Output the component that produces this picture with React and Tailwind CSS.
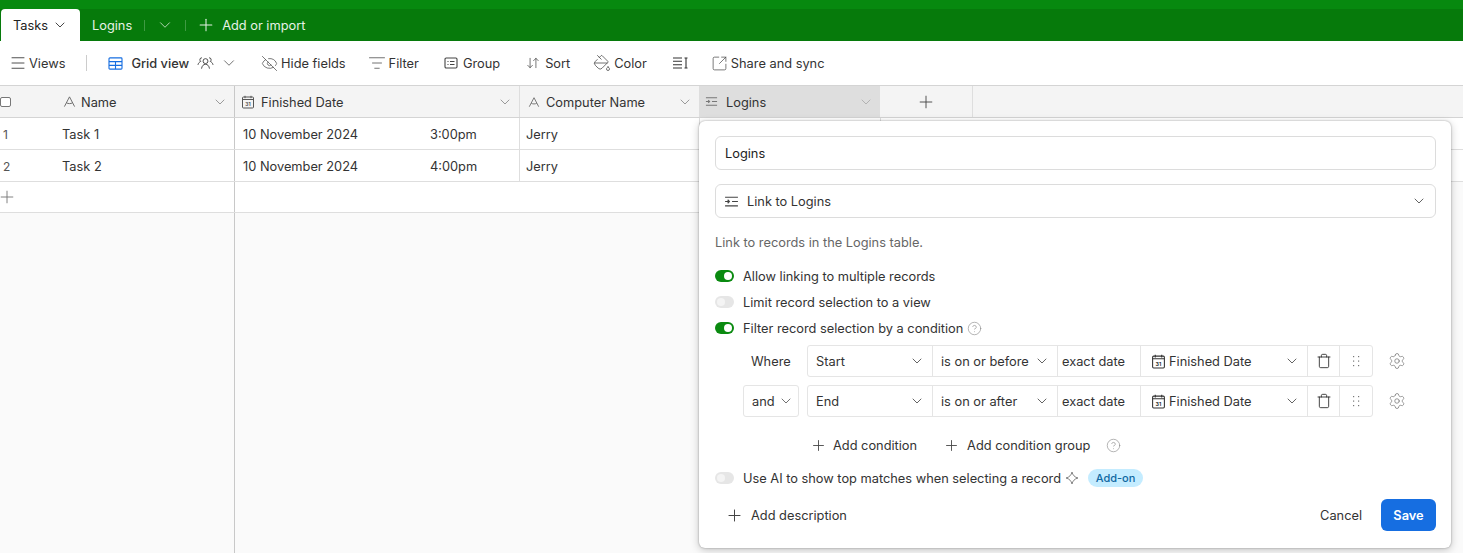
import { ChevronDown, Plus, Menu, EyeOff, ListFilter, ArrowDownUp, PaintBucket, SquareArrowOutUpRight, Trash, Settings, CircleHelp } from "lucide-react";

const T = ({ className = "", children }) => <span className={`pt-[2px] ${className}`}>{children}</span>;

const CalendarIcon = ({ className = "" }) => (
    <svg viewBox="0 0 14 14" className={className} fill="none" stroke="currentColor" strokeWidth="1">
        <rect x="1.5" y="2" width="11" height="11" rx="1" />
        <path d="M1.5 4.5h11M4 .8v2.400M10 .8v2.400" />
        <text x="7" y="11" textAnchor="middle" fontSize="5" fontWeight="700" fill="currentColor" stroke="none">31</text>
    </svg>
);

const LinkIcon = ({ className = "" }) => (
    <svg viewBox="0 0 14 14" className={className} fill="none" stroke="currentColor" strokeWidth="1.1">
        <path d="M1 3h12M7.500 7h5.500M1 11h12M1 7h3.800M3.400 5.400 5 7 3.400 8.600" />
    </svg>
);

const TextIcon = ({ className = "" }) => (
    <svg viewBox="0 0 14 14" className={className} fill="none" stroke="currentColor" strokeWidth="1">
        <path d="M1.500 12.500 7 2l5.500 10.500M3.800 8.500c2 1 4.400 1 6.400 0" />
    </svg>
);

const GridIcon = () => (
    <svg viewBox="0 0 16 14" className="h-[13px] w-[15px] text-[#166ee1]" fill="none" stroke="currentColor" strokeWidth="1.2">
        <rect x="1" y="1" width="14" height="12" rx="1" />
        <path d="M1 5h14M1 9h14M8 5v8" />
    </svg>
);

const PeopleIcon = () => (
    <svg viewBox="0 0 18 14" className="h-[14px] w-[17px] text-[#333]" fill="none" stroke="currentColor" strokeWidth="0.9">
        <circle cx="9" cy="5" r="2.600" />
        <path d="M4.800 13c.4-3 2-4.600 4.200-4.600s3.800 1.600 4.200 4.600" />
        <path d="M5.200 1.500a2 2 0 0 0-1.200 3.700C2.400 6 1.400 7.200 1 9M12.800 1.500a2 2 0 0 1 1.200 3.700c1.600.8 2.600 2 3 3.800" />
    </svg>
);

const GroupIcon = () => (
    <svg viewBox="0 0 14 14" className="h-[14px] w-[14px] text-[#444]" fill="none" stroke="currentColor" strokeWidth="1.1">
        <rect x="1" y="2" width="12" height="10" rx="1.200" />
        <path d="M3.500 5.500h1M6 5.500h4.500M3.500 8.500h1M6 8.500h4.500" />
    </svg>
);

const RowHeightIcon = () => (
    <svg viewBox="0 0 16 14" className="h-[14px] w-[16px] text-[#333]" fill="none" stroke="currentColor" strokeWidth="1.1">
        <path d="M1 2h9M1 5.300h9M1 8.700h9M1 12h9M12.500 2h3M14 2v10M12.500 12h3" />
    </svg>
);

const GripIcon = () => (
    <svg viewBox="0 0 10 14" className="h-[14px] w-[10px] text-[#777]" fill="currentColor">
        <rect x="2" y="2" width="1.200" height="1.200" />
        <rect x="7" y="2" width="1.200" height="1.200" />
        <rect x="2" y="6.500" width="1.200" height="1.200" />
        <rect x="7" y="6.500" width="1.200" height="1.200" />
        <rect x="2" y="11" width="1.200" height="1.200" />
        <rect x="7" y="11" width="1.200" height="1.200" />
    </svg>
);

const SparkIcon = () => (
    <svg viewBox="0 0 14 14" className="h-[14px] w-[14px] text-[#777]" fill="none" stroke="currentColor" strokeWidth="0.9">
        <path d="M7 1C7.600 4 9.700 6.300 13 7 9.700 7.700 7.600 10 7 13 6.400 10 4.300 7.700 1 7 4.300 6.300 6.400 4 7 1Z" />
    </svg>
);

const Toggle = ({ on }) => (
    <div className={`flex h-[12px] w-[19px] shrink-0 items-center rounded-full p-[2px] ${on ? "justify-end bg-[#0a8a10]" : "justify-start bg-[#e6e6e6]"}`}>
        <div className={`h-[8px] w-[8px] rounded-full ${on ? "bg-white" : "bg-[#f4f4f4]"}`} />
    </div>
);

const ToolItem = ({ icon, label, className = "", gap = "gap-[3px]" }) => (
    <div className={`flex items-center text-[#333] ${gap} ${className}`}>
        {icon}
        <T>{label}</T>
    </div>
);

const Row = ({ num, name, time, computer }) => (
    <div className="flex h-[32px] border-b border-[#dedede] bg-white text-[#333]">
        <div className="flex w-[235px] shrink-0 items-center border-r border-[#c8c8c8]">
            <T className="w-[62px] pl-[3px] text-[12px] text-[#555]">{num}</T>
            <T>{name}</T>
        </div>
        <div className="flex w-[285px] shrink-0 items-center border-r border-[#dedede] pl-[8px]">
            <T className="w-[187px]">10 November 2024</T>
            <T>{time}</T>
        </div>
        <div className="flex w-[180px] shrink-0 items-center border-r border-[#dedede] pl-[6px]">
            <T>{computer}</T>
        </div>
        <div className="w-[181px] shrink-0 border-r border-[#dedede]" />
    </div>
);

const HeaderCell = ({ icon, label, className = "", chevron = "text-[#888]" }) => (
    <div className={`flex shrink-0 items-center ${className}`}>
        {icon}
        <T className="flex-1 text-[#333]">{label}</T>
        <ChevronDown className={`mr-[6px] h-[16px] w-[16px] ${chevron}`} strokeWidth={1.25} />
    </div>
);

const Cell = ({ className = "", children }) => (
    <div className={`flex h-full shrink-0 items-center border-r border-[#e5e5e5] text-[#333] ${className}`}>{children}</div>
);

const FilterRow = ({ label, field, op }) => (
    <div className="flex h-[32px] items-center">
        {label === "and" ? (
            <div className="ml-[28px] mr-[8px] flex h-[32px] w-[56px] shrink-0 items-center justify-between rounded-[3px] border border-[#e5e5e5] pl-[8px] pr-[4px] text-[#333]">
                <T>and</T>
                <ChevronDown className="h-[16px] w-[16px] text-[#555]" strokeWidth={1.25} />
            </div>
        ) : (
            <T className="ml-[36px] w-[56px] shrink-0 text-[#333]">{label}</T>
        )}
        <div className="flex h-[32px] w-[566px] shrink-0 items-center rounded-[3px] border border-[#e5e5e5]">
            <Cell className="w-[125px] justify-between pl-[8px] pr-[7px]">
                <T>{field}</T>
                <ChevronDown className="h-[16px] w-[16px] text-[#444]" strokeWidth={1.25} />
            </Cell>
            <Cell className="w-[125px] justify-between pl-[8px] pr-[7px]">
                <T>{op}</T>
                <ChevronDown className="h-[16px] w-[16px] text-[#444]" strokeWidth={1.25} />
            </Cell>
            <Cell className="w-[83px] pl-[4px]">
                <T>exact date</T>
            </Cell>
            <Cell className="w-[167px] justify-between pl-[10px] pr-[7px]">
                <span className="flex items-center gap-[3px]">
                    <CalendarIcon className="h-[15px] w-[15px] text-[#333]" />
                    <T>Finished Date</T>
                </span>
                <ChevronDown className="h-[16px] w-[16px] text-[#444]" strokeWidth={1.25} />
            </Cell>
            <Cell className="w-[32px] justify-center">
                <Trash className="h-[16px] w-[16px] text-[#222]" strokeWidth={1.25} />
            </Cell>
            <div className="flex flex-1 items-center justify-center">
                <GripIcon />
            </div>
        </div>
        <Settings className="ml-[15px] h-[18px] w-[18px] text-[#777]" strokeWidth={1} />
    </div>
);

const LinkPopup = () => (
    <div className="absolute left-[699px] top-[121px] flex h-[427px] w-[752px] flex-col rounded-[6px] bg-white pl-[16px] pr-[15px] pt-[15px] shadow-[0_0_2px_rgba(0,0,0,0.35),0_2px_8px_rgba(0,0,0,0.22)]">
        <div className="flex h-[34px] items-center rounded-[6px] border border-[#dcdcdc] pl-[9px] text-[#222]">
            <T>Logins</T>
        </div>
        <div className="mt-[14px] flex h-[34px] items-center rounded-[6px] border border-[#dcdcdc] pl-[8px] pr-[8px] text-[#333]">
            <LinkIcon className="mr-[8px] h-[15px] w-[15px] text-[#444]" />
            <T className="flex-1">Link to Logins</T>
            <ChevronDown className="h-[16px] w-[16px] text-[#444]" strokeWidth={1.25} />
        </div>
        <p className="mt-[17px] h-[16px] leading-[16px] text-[#666]">Link to records in the Logins table.</p>
        <div className="mt-[17px] flex h-[16px] items-center gap-[9px] text-[#333]">
            <Toggle on />
            <T>Allow linking to multiple records</T>
        </div>
        <div className="mt-[10px] flex h-[16px] items-center gap-[9px] text-[#333]">
            <Toggle />
            <T>Limit record selection to a view</T>
        </div>
        <div className="mt-[10px] flex h-[16px] items-center gap-[9px] text-[#333]">
            <Toggle on />
            <T>Filter record selection by a condition</T>
            <CircleHelp className="-ml-[5px] h-[15px] w-[15px] text-[#888]" strokeWidth={1} />
        </div>
        <div className="mt-[9px] flex flex-col gap-[8px]">
            <FilterRow label="Where" field="Start" op="is on or before" />
            <FilterRow label="and" field="End" op="is on or after" />
        </div>
        <div className="mt-[20px] flex h-[16px] items-center pl-[95px] text-[#333]">
            <Plus className="h-[17px] w-[17px] text-[#444]" strokeWidth={1.25} />
            <T className="ml-[6px]">Add condition</T>
            <Plus className="ml-[26px] h-[17px] w-[17px] text-[#444]" strokeWidth={1.25} />
            <T className="ml-[7px]">Add condition group</T>
            <CircleHelp className="ml-[16px] h-[15px] w-[15px] text-[#888]" strokeWidth={1} />
        </div>
        <div className="mt-[17px] flex h-[16px] items-center text-[#333]">
            <Toggle />
            <T className="ml-[9px]">Use AI to show top matches when selecting a record</T>
            <span className="ml-[4px]"><SparkIcon /></span>
            <span className="ml-[9px] flex h-[18px] w-[55px] items-center justify-center rounded-full bg-[#c4ecff] text-[11px] font-medium text-[#0f68a2]">Add-on</span>
        </div>
        <div className="mt-[13px] flex h-[32px] items-center">
            <Plus className="ml-[10px] h-[19px] w-[19px] text-[#444]" strokeWidth={1.25} />
            <T className="ml-[7px] flex-1 text-[#333]">Add description</T>
            <T className="mr-[19px] text-[#333]">Cancel</T>
            <button className="h-[32px] w-[55px] rounded-[6px] bg-[#166ee1] pt-[2px] font-semibold text-white">Save</button>
        </div>
    </div>
);

const App = () => {
    return (
        <div className="relative h-[553px] w-[1463px] overflow-hidden bg-[#fafafa] font-['Inter','Liberation_Sans',sans-serif] text-[12.8px]">
            <div className="h-[41px] bg-[linear-gradient(#07890f_0,#07890f_9px,#067a0b_9px,#067a0b_100%)] pt-[9px]">
                <div className="flex h-[32px] items-center text-[#e6f2e6]">
                    <div className="ml-[1px] flex h-[32px] w-[79px] items-center rounded-t-[4px] bg-white pl-[12px] text-[#222]">
                        <T>Tasks</T>
                        <ChevronDown className="ml-[4px] h-[16px] w-[16px]" strokeWidth={1.25} />
                    </div>
                    <T className="ml-[12px]">Logins</T>
                    <div className="ml-[12px] h-[11px] w-px bg-[#3f9a43]" />
                    <ChevronDown className="ml-[11px] h-[18px] w-[18px]" strokeWidth={1} />
                    <div className="ml-[11px] h-[11px] w-px bg-[#3f9a43]" />
                    <Plus className="ml-[10px] h-[20px] w-[20px]" strokeWidth={1.25} />
                    <T className="ml-[6px]">Add or import</T>
                </div>
            </div>

            <div className="flex h-[45px] items-center border-b border-[#d4d4d4] bg-white pl-[9px]">
                <ToolItem icon={<Menu className="h-[18px] w-[18px] text-[#444]" strokeWidth={1.25} />} label="Views" className="text-[#222]" gap="gap-[2px]" />
                <div className="ml-[21px] h-[16px] w-px bg-[#ccc]" />
                <div className="ml-[21px]"><GridIcon /></div>
                <T className="ml-[8px] font-medium text-[#333]">Grid view</T>
                <div className="ml-[8px]"><PeopleIcon /></div>
                <ChevronDown className="ml-[6px] h-[18px] w-[18px] text-[#444]" strokeWidth={1} />
                <ToolItem icon={<EyeOff className="h-[17px] w-[17px] text-[#444]" strokeWidth={1} />} label="Hide fields" className="ml-[23px]" />
                <ToolItem icon={<ListFilter className="h-[18px] w-[18px] text-[#444]" strokeWidth={1} />} label="Filter" className="ml-[22px]" />
                <ToolItem icon={<GroupIcon />} label="Group" className="ml-[25px]" gap="gap-[5px]" />
                <ToolItem icon={<ArrowDownUp className="h-[14px] w-[14px] text-[#444]" strokeWidth={1.25} />} label="Sort" className="ml-[26px]" gap="gap-[5px]" />
                <ToolItem icon={<PaintBucket className="h-[18px] w-[18px] text-[#444]" strokeWidth={1} />} label="Color" className="ml-[23px]" />
                <div className="ml-[25px]"><RowHeightIcon /></div>
                <ToolItem icon={<SquareArrowOutUpRight className="h-[17px] w-[17px] text-[#444]" strokeWidth={1} />} label="Share and sync" className="ml-[23px]" />
            </div>

            <div className="flex h-[32px] border-b border-[#d4d4d4] bg-[#f4f4f4]">
                <div className="flex w-[235px] shrink-0 items-center border-r border-[#c8c8c8]">
                    <div className="h-[10px] w-[11px] rounded-[2px] border border-[#777] bg-white" />
                    <TextIcon className="ml-[52px] mr-[5px] h-[13px] w-[13px] text-[#666]" />
                    <T className="flex-1 text-[#333]">Name</T>
                    <ChevronDown className="mr-[6px] h-[16px] w-[16px] text-[#888]" strokeWidth={1.25} />
                </div>
                <HeaderCell
                    className="w-[285px] border-r border-[#dedede] pl-[6px]"
                    icon={<CalendarIcon className="mr-[6px] h-[14px] w-[14px] text-[#555]" />}
                    label="Finished Date"
                />
                <HeaderCell
                    className="w-[179px] pl-[8px]"
                    icon={<TextIcon className="mr-[6px] h-[12px] w-[12px] text-[#666]" />}
                    label="Computer Name"
                />
                <HeaderCell
                    className="w-[181px] bg-[#dedede] pl-[6px]"
                    icon={<LinkIcon className="mr-[8px] h-[13px] w-[13px] text-[#777]" />}
                    label="Logins"
                    chevron="text-[#aaa]"
                />
                <div className="flex w-[93px] shrink-0 items-center justify-center border-r border-[#dedede]">
                    <Plus className="h-[20px] w-[20px] text-[#444]" strokeWidth={1.1} />
                </div>
            </div>

            <Row num="1" name="Task 1" time="3:00pm" computer="Jerry" />
            <Row num="2" name="Task 2" time="4:00pm" computer="Jerry" />
            <div className="flex h-[31px] w-[700px] border-b border-[#dedede] bg-white">
                <div className="flex w-[235px] shrink-0 items-center border-r border-[#c8c8c8]">
                    <Plus className="-ml-[3px] h-[20px] w-[20px] text-[#777]" strokeWidth={1.1} />
                </div>
            </div>
            <div className="h-[400px] w-[235px] border-r border-[#c8c8c8]" />

            <LinkPopup />
        </div>
    );
};

export default App;
